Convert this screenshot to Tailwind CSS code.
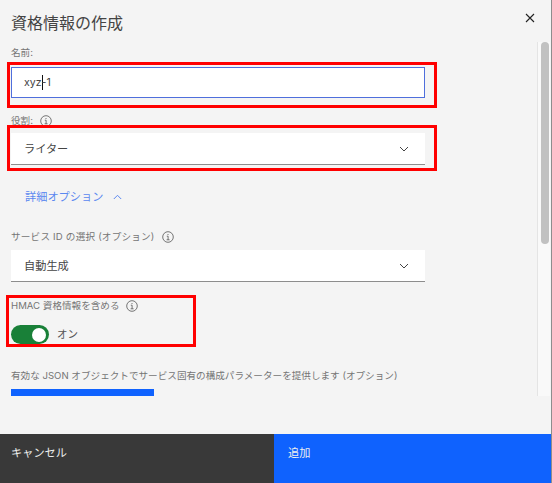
<!DOCTYPE html>
<html lang="ja">
<head>
    <meta charset="UTF-8">
    <title>資格情報の作成</title>
    <script src="https://cdn.jsdelivr.net/npm/@tailwindcss/browser@4"></script>
</head>
<body class="bg-[#f4f4f4] font-['Inter','Noto_Sans_CJK_JP',sans-serif] overflow-hidden">
    <div class="relative w-[552px] h-[483px] flex flex-col border-r border-[#8d8d8d]">
        <!-- header -->
        <div class="h-[42px] pl-[11px] pr-[15px] flex justify-between">
            <h1 class="mt-[12px] text-[16px] leading-[22px] text-[#444]">資格情報の作成</h1>
            <svg class="mt-[12px] w-[12px] h-[12px] text-[#222]" viewBox="0 0 12 12" fill="none" stroke="currentColor" stroke-width="1.1"><path d="M2 2l8 8M10 2l-8 8"/></svg>
        </div>

        <div class="h-[392px] flex">
            <!-- form -->
            <div class="w-[537px] h-[354px] pl-[11px] overflow-hidden">
                <label class="block mt-[4px] h-[21px] text-[9.6px] leading-[14px] text-[#757575]">名前:</label>
                <div class="w-[414px] h-[31px] bg-white border border-[#4f6fdc] pl-[12px] flex items-center text-[10.6px] text-[#444]">
                    <span>xyz</span><span class="w-px h-[15px] bg-[#111]"></span><span class="-ml-[1px]">-1</span>
                </div>

                <div class="mt-[16px] h-[19px] flex items-start gap-[7px] text-[9.6px] leading-[14px] text-[#757575]">
                    <span>役割:</span>
                    <svg class="w-[12px] h-[12px] mt-px" viewBox="0 0 12 12" fill="none" stroke="#555" stroke-width="0.8"><circle cx="6" cy="6" r="5.3"/><path d="M4.8 5.2H6.1V8.8M4.6 8.8H7.6M6 3v1"/></svg>
                </div>
                <div class="w-[414px] h-[32px] bg-white border-b border-[#8d8d8d] pl-[13px] pr-[16px] flex items-center justify-between text-[11.2px] text-[#444]">
                    <span class="pt-px">ライター</span>
                    <svg class="w-[10px] h-[6px]" viewBox="0 0 10 6" fill="none" stroke="#444" stroke-width="1"><path d="M1 1l4 4 4-4"/></svg>
                </div>

                <div class="mt-[24px] ml-[14px] flex items-center gap-[10px] text-[11.2px] leading-[16px] text-[#5b88f0]">
                    <span>詳細オプション</span>
                    <svg class="w-[9px] h-[6px]" viewBox="0 0 9 6" fill="none" stroke="#5b88f0" stroke-width="1"><path d="M.8 5l3.7-3.7L8.2 5"/></svg>
                </div>

                <div class="mt-[25px] h-[20px] flex items-start gap-[7px] text-[9.6px] leading-[14px] text-[#757575]">
                    <span class="tracking-[0.2px]">サービス ID の選択 (オプション)</span>
                    <svg class="w-[12px] h-[12px] mt-px" viewBox="0 0 12 12" fill="none" stroke="#555" stroke-width="0.8"><circle cx="6" cy="6" r="5.3"/><path d="M4.8 5.2H6.1V8.8M4.6 8.8H7.6M6 3v1"/></svg>
                </div>
                <div class="w-[414px] h-[32px] bg-white border-b border-[#8d8d8d] pl-[13px] pr-[16px] flex items-center justify-between text-[11.2px] text-[#444]">
                    <span class="pt-px">自動生成</span>
                    <svg class="w-[10px] h-[6px]" viewBox="0 0 10 6" fill="none" stroke="#444" stroke-width="1"><path d="M1 1l4 4 4-4"/></svg>
                </div>

                <div class="mt-[17px] h-[26px] flex items-start gap-[6px] text-[9.6px] leading-[14px] text-[#757575]">
                    <span>HMAC 資格情報を含める</span>
                    <svg class="w-[12px] h-[12px] mt-px" viewBox="0 0 12 12" fill="none" stroke="#555" stroke-width="0.8"><circle cx="6" cy="6" r="5.3"/><path d="M4.8 5.2H6.1V8.8M4.6 8.8H7.6M6 3v1"/></svg>
                </div>
                <div class="flex items-center gap-[8px] text-[10.5px] text-[#555]">
                    <div class="w-[38px] h-[19px] rounded-full bg-[#198038] flex items-center justify-end pr-[3px]">
                        <div class="w-[14px] h-[14px] rounded-full bg-white"></div>
                    </div>
                    <span>オン</span>
                </div>

                <p class="mt-[25px] text-[9.6px] leading-[14px] text-[#757575] whitespace-nowrap">有効な JSON オブジェクトでサービス固有の構成パラメーターを提供します (オプション)</p>
                <div class="mt-[6px] w-[143px] h-[7px] bg-[#0f62fe]"></div>
            </div>

            <!-- scrollbar -->
            <div class="w-[13px] h-[354px] bg-[#f9f9f9] border-l border-[#e4e4e4] pl-[3px]">
                <div class="w-[8px] h-[202px] rounded-full bg-[#c1c1c1]"></div>
            </div>
        </div>

        <!-- footer -->
        <div class="flex-1 flex text-[11.2px] leading-[16px] text-[#eee]">
            <div class="w-[274px] bg-[#393939] pl-[11px] pt-[11px]">キャンセル</div>
            <div class="flex-1 bg-[#0f62fe] pl-[14px] pt-[11px]">追加</div>
        </div>

        <!-- red annotation boxes -->
        <div class="absolute left-[7px] top-[62px] w-[430px] h-[46px] border-[3px] border-[#ff0000]"></div>
        <div class="absolute left-[7px] top-[125px] w-[430px] h-[46px] border-[3px] border-[#ff0000]"></div>
        <div class="absolute left-[6px] top-[295px] w-[190px] h-[52px] border-[3px] border-[#ff0000]"></div>
    </div>
</body>
</html>
